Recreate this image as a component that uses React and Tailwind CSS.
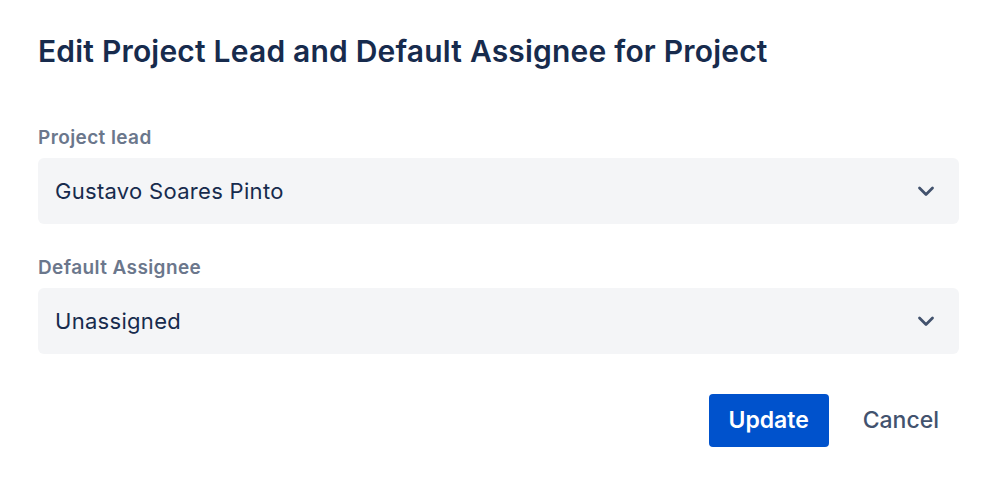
import React from "react";

function Chevron() {
  return (
    <svg width="20" height="20" viewBox="0 0 20 20" fill="none">
      <path d="M3.5 7l6.5 6.5 6.5-6.5" stroke="#42526E" strokeWidth="2.8" strokeLinecap="round" strokeLinejoin="round" />
    </svg>
  );
}

function Field({ label, value }) {
  return (
    <div className="flex flex-col">
      <div className="text-[19px] font-semibold text-[#6B778C] leading-[24px] mb-[8px] tracking-[0.4px]">{label}</div>
      <div className="h-[66px] bg-[#F4F5F7] rounded-[6px] flex items-center justify-between pl-[17px] pr-[23px]">
        <span className="text-[22px] text-[#172B4D] tracking-[0.3px]">{value}</span>
        <Chevron />
      </div>
    </div>
  );
}

export default function App() {
  return (
    <div className="w-[998px] h-[484px] bg-white pl-[38px] pr-[39px] pt-[31px]" style={{ fontFamily: "Inter, 'Noto Sans', sans-serif" }}>
      <h1 className="text-[30px] font-semibold text-[#172B4D] leading-[40px] tracking-[0.2px]">
        Edit Project Lead and Default Assignee for Project
      </h1>
      <div className="mt-[55px] flex flex-col gap-[32px]">
        <Field label="Project lead" value="Gustavo Soares Pinto" />
        <Field label="Default Assignee" value="Unassigned" />
      </div>
      <div className="mt-[40px] flex justify-end items-center gap-[14px]">
        <button className="h-[53px] w-[120px] bg-[#0052CC] rounded-[4px] text-white text-[23px] font-semibold">Update</button>
        <button className="h-[53px] px-[20px] text-[#42526E] text-[23px] font-medium">Cancel</button>
      </div>
    </div>
  );
}
